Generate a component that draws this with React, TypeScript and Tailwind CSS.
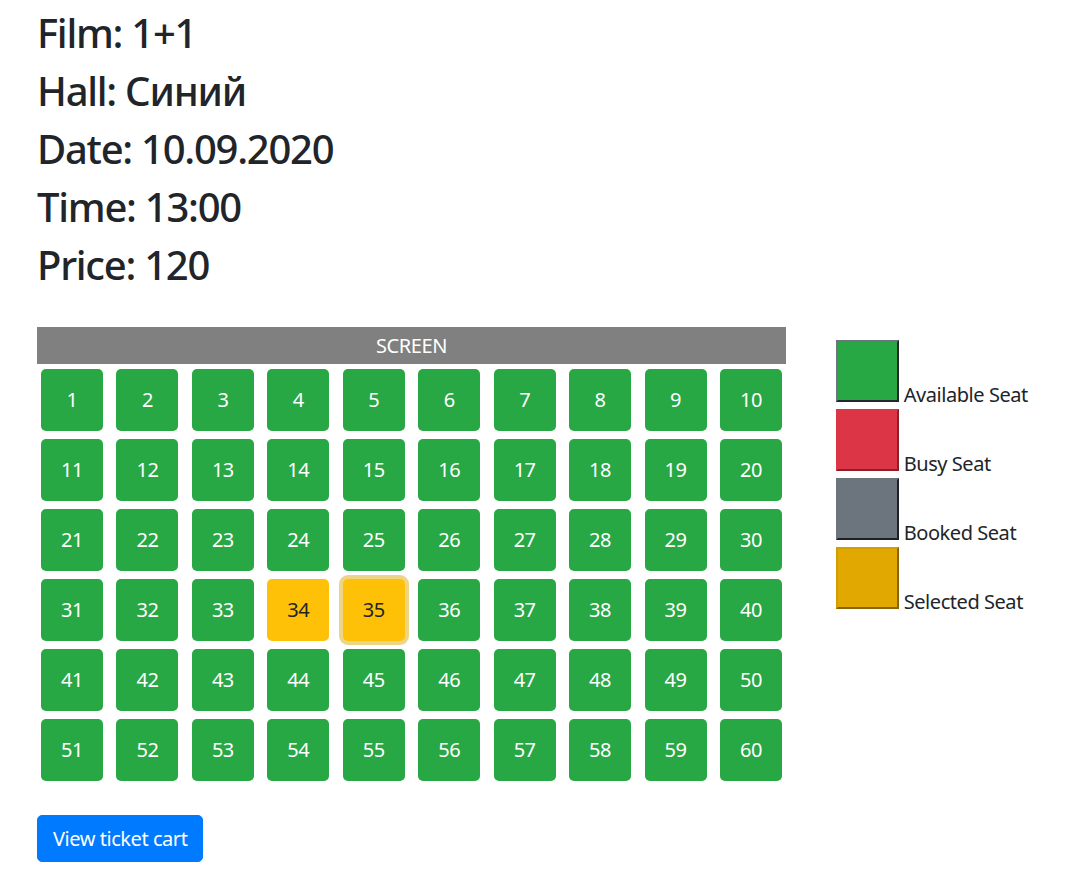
import React from "react";

const seats = Array.from({ length: 60 }, (_, i) => i + 1);
const rows = [0, 1, 2, 3, 4, 5].map((r) => seats.slice(r * 10, r * 10 + 10));

function Seat({ n }: { n: number }) {
  if (n === 34) {
    return (
      <div className="w-[62px] h-[62px] rounded-[5px] bg-[#ffc107] text-[#212529] flex items-center justify-center text-[20px]">
        {n}
      </div>
    );
  }
  if (n === 35) {
    return (
      <div className="w-[62px] h-[62px] rounded-[5px] bg-[#ffc107] text-[#212529] flex items-center justify-center text-[20px] shadow-[0_0_0_4px_rgba(222,170,12,0.5)]">
        {n}
      </div>
    );
  }
  return (
    <div className="w-[62px] h-[62px] rounded-[5px] bg-[#28a745] text-white flex items-center justify-center text-[20px]">
      {n}
    </div>
  );
}

function Legend({ box, label }: { box: string; label: string }) {
  return (
    <div className="leading-[29px] text-[20px] whitespace-nowrap">
      <span className={`inline-block w-[63px] h-[62px] border-2 box-border align-baseline ${box}`}></span>{" "}
      {label}
    </div>
  );
}

export default function App() {
  return (
    <div
      className="min-h-[876px] bg-white text-[#212529] pl-[37px] pt-[9px] tracking-[-0.45px]"
      style={{ fontFamily: '"Noto Sans", "Open Sans", sans-serif' }}
    >
      <div className="text-[40px] leading-[48px] font-medium tracking-[-1.26px]">
        <div className="mb-[10px]">Film: 1+1</div>
        <div className="mb-[10px]">Hall: Синий</div>
        <div className="mb-[10px]">Date: 10.09.2020</div>
        <div className="mb-[10px]">Time: 13:00</div>
        <div className="mb-[10px]">Price: 120</div>
      </div>
      <div className="flex mt-[38px]">
        <div className="w-[749px]">
          <div className="h-[37px] bg-[#808080] text-white text-[20px] flex items-center justify-center">SCREEN</div>
          <div className="flex flex-col gap-[8px] mt-[5px]">
            {rows.map((row, i) => (
              <div key={i} className="flex justify-between px-[4px]">
                {row.map((n) => (
                  <Seat key={n} n={n} />
                ))}
              </div>
            ))}
          </div>
          <button className="mt-[34px] bg-[#007bff] text-white text-[20px] leading-[30px] px-[15px] py-[7.5px] rounded-[5px] border border-[#007bff]">
            View ticket cart
          </button>
        </div>
        <div className="ml-[50px] mt-[13px]">
          <Legend box="bg-[#28a745] border-t-[#6c757d] border-l-[#6c757d] border-r-[#23272b] border-b-[#23272b]" label="Available Seat" />
          <Legend box="bg-[#dc3545] border-t-[#dc3545] border-l-[#dc3545] border-r-[#8e1f2a] border-b-[#8e1f2a]" label="Busy Seat" />
          <Legend box="bg-[#6c757d] border-t-[#6c757d] border-l-[#6c757d] border-r-[#1d2124] border-b-[#1d2124]" label="Booked Seat" />
          <Legend box="bg-[#e0a800] border-t-[#d39e00] border-l-[#d39e00] border-r-[#8a6400] border-b-[#8a6400]" label="Selected Seat" />
        </div>
      </div>
    </div>
  );
}
